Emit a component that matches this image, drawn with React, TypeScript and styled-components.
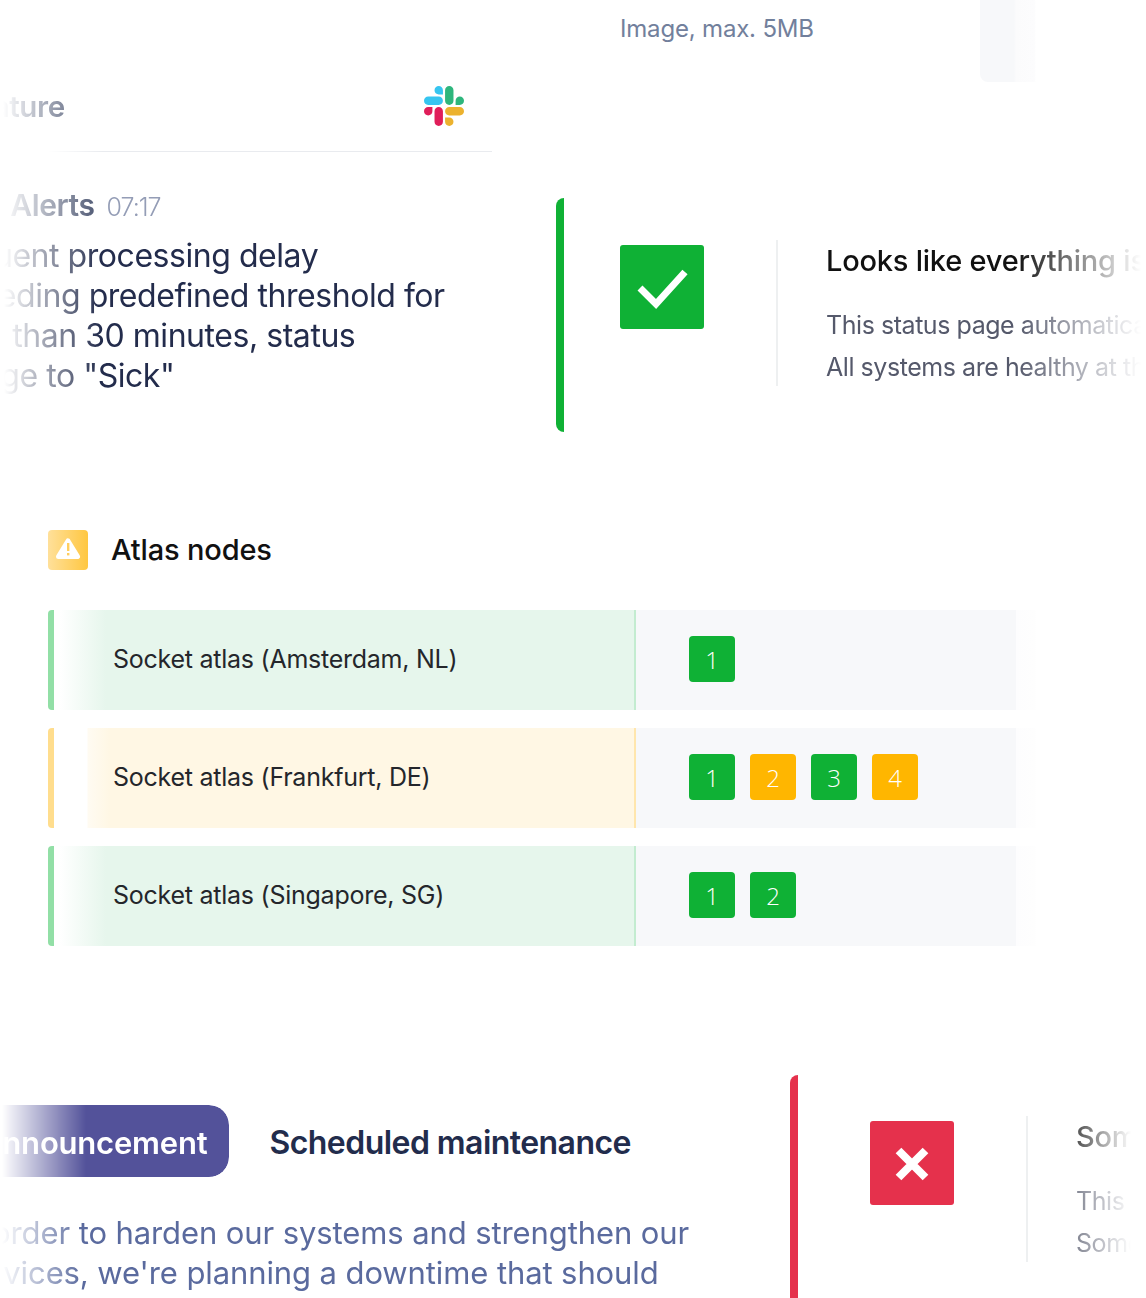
import React from "react";
import styled, { createGlobalStyle, css } from "styled-components";

const Global = createGlobalStyle`
  html, body { margin: 0; padding: 0; background: #fff; }
  body { font-family: Inter, "Liberation Sans", sans-serif; overflow: hidden; }
`;

const fade = (from: number, to: number) => css`
  -webkit-mask-image: linear-gradient(90deg, transparent ${from}px, #000 ${to}px);
  mask-image: linear-gradient(90deg, transparent ${from}px, #000 ${to}px);
`;

const Page = styled.div`
  width: 1146px;
  height: 1298px;
  overflow: hidden;
  background: #fff;
  display: flex;
  flex-direction: column;
`;

const TopRow = styled.section`
  display: grid;
  grid-template-columns: 556px 590px;
  height: 432px;
`;

const LeftPanel = styled.div`
  width: 564px;
  margin-left: -72px;
  padding-top: 62px;
`;

const ChannelHeader = styled.header`
  height: 90px;
  box-sizing: border-box;
  padding: 0 28px 2px 3px;
  display: flex;
  align-items: center;
  justify-content: space-between;
`;

const ChannelRule = styled.div`
  height: 1px;
  background: #e9ebef;
  margin-top: -1px;
  ${fade(120, 175)}
`;

const ChannelName = styled.span`
  font-size: 29.5px;
  font-weight: 600;
  letter-spacing: -0.4px;
  color: #3f4a68;
  ${fade(72, 165)}
`;

const Message = styled.div`
  padding-top: 37px;
  ${fade(76, 172)}
`;

const Author = styled.div`
  display: flex;
  align-items: baseline;
  gap: 12px;
  height: 32px;
  line-height: 32px;
  margin-bottom: 15px;
  padding-left: 13px;
`;

const AuthorName = styled.span`
  font-size: 30px;
  font-weight: 600;
  letter-spacing: -0.4px;
  color: #4a5470;
`;

const Time = styled.span`
  font-size: 25px;
  font-weight: 300;
  letter-spacing: -1px;
  color: #949db6;
`;

const MessageText = styled.p`
  margin: 0;
  font-size: 32px;
  line-height: 40px;
  letter-spacing: -0.45px;
  color: #232c4c;
  white-space: nowrap;
`;

const RightTop = styled.div`
  display: flex;
  flex-direction: column;
`;

const UploadRow = styled.div`
  height: 198px;
  display: flex;
  justify-content: space-between;
  align-items: flex-start;
  padding: 0 110px 0 64px;
`;

const UploadHint = styled.span`
  font-size: 24px;
  line-height: 58px;
  letter-spacing: -0.18px;
  color: #72809c;
`;

const GhostCard = styled.div`
  width: 56px;
  height: 82px;
  border-radius: 0 0 0 8px;
  background: linear-gradient(90deg, #f7f8fa 60%, #fbfbfc 65%, #fcfcfd 97%, #fff);
`;

const Status = styled.div<{ $height: number }>`
  display: flex;
  height: ${(p) => p.$height}px;
  min-width: 0;
`;

const StatusBar = styled.div<{ $color: string; $top?: number }>`
  width: 8px;
  flex: none;
  margin-top: ${(p) => p.$top ?? 0}px;
  background: ${(p) => p.$color};
  border-radius: 10px 0 0 10px;
`;

const StatusIcon = styled.div<{ $color: string; $inset: number }>`
  width: 84px;
  height: 84px;
  flex: none;
  margin: 47px 0 0 ${(p) => p.$inset}px;
  border-radius: 3px;
  background: ${(p) => p.$color};
  display: flex;
`;

const StatusDivider = styled.div`
  width: 2px;
  height: 146px;
  flex: none;
  margin: 42px 48px 0 72px;
  background: #eef0f1;
`;

const StatusBody = styled.div<{ $from: number; $to: number }>`
  flex: 1;
  min-width: 0;
  overflow: hidden;
  white-space: nowrap;
  padding-top: 43px;
  ${(p) => css`
    -webkit-mask-image: linear-gradient(90deg, #000 ${p.$from}px, transparent ${p.$to}px);
    mask-image: linear-gradient(90deg, #000 ${p.$from}px, transparent ${p.$to}px);
  `}
`;

const StatusTitle = styled.div`
  font-size: 29px;
  line-height: 40px;
  font-weight: 500;
  letter-spacing: -0.22px;
  color: #111;
  margin-bottom: 23px;
`;

const StatusLine = styled.div`
  font-size: 25px;
  line-height: 42px;
  letter-spacing: -0.45px;
  color: #55596b;
`;

const Atlas = styled.section`
  margin-top: 98px;
  padding-left: 48px;
`;

const AtlasHead = styled.div`
  display: flex;
  align-items: center;
  gap: 23px;
  height: 40px;
  margin-bottom: 40px;
`;

const WarnIcon = styled.div`
  width: 40px;
  height: 40px;
  border-radius: 4px;
  background: linear-gradient(90deg, #ffe09a, #ffc741);
  display: flex;
`;

const AtlasTitle = styled.h2`
  margin: 0 0 2px;
  font-size: 29px;
  font-weight: 500;
  letter-spacing: -0.15px;
  color: #111;
`;

const Rows = styled.div`
  width: 988px;
  display: flex;
  flex-direction: column;
  gap: 18px;
`;

const Row = styled.div`
  display: flex;
  height: 100px;
`;

const RowBar = styled.div<{ $warn?: boolean }>`
  width: 6px;
  flex: none;
  border-radius: 4px 0 0 4px;
  background: ${(p) => (p.$warn ? "#ffdd8d" : "#92dfa6")};
`;

const RowName = styled.div<{ $warn?: boolean }>`
  width: 582px;
  flex: none;
  box-sizing: border-box;
  padding: 0 0 2px 59px;
  display: flex;
  align-items: center;
  font-size: 25px;
  letter-spacing: -0.25px;
  color: #24262b;
  border-right: 2px solid ${(p) => (p.$warn ? "#ffe6ad" : "#c3ecd0")};
  background: ${(p) =>
    p.$warn
      ? "linear-gradient(90deg, #fff 33px, #fffbf2 34px, #fff7e4 56px)"
      : "linear-gradient(90deg, #fff 6px, #e6f6ec 52px)"};
`;

const RowReplicas = styled.div`
  flex: 1;
  background: linear-gradient(90deg, #f7f8fa 380px, #fdfdfe 380px, #fefefe 399px, #fff 400px);
  display: flex;
  align-items: center;
  gap: 15px;
  padding: 0 0 2px 53px;
`;

const Replica = styled.span<{ $warn?: boolean }>`
  width: 46px;
  height: 46px;
  border-radius: 4px;
  background: ${(p) => (p.$warn ? "#ffb600" : "#0fb135")};
  color: #fff;
  display: flex;
  align-items: center;
  justify-content: center;
  font-family: "Open Sans", sans-serif;
  font-size: 24px;
  font-weight: 300;
`;

const BottomRow = styled.section`
  display: grid;
  grid-template-columns: 790px 356px;
  margin-top: 128px;
`;

const Announcement = styled.div`
  margin-left: -48px;
  padding-top: 31px;
`;

const AnnouncementHead = styled.div`
  display: flex;
  align-items: center;
  gap: 40px;
`;

const Pill = styled.span`
  height: 72px;
  box-sizing: border-box;
  padding: 2px 22px 0 28px;
  display: flex;
  align-items: center;
  border-radius: 0 20px 20px 0;
  background: #53529a;
  color: #fff;
  font-size: 31px;
  font-weight: 600;
  letter-spacing: -0.2px;
  ${fade(50, 134)}
`;

const AnnouncementTitle = styled.h3`
  margin: 2px 0 0;
  font-size: 32px;
  font-weight: 600;
  letter-spacing: -0.55px;
  color: #222c4c;
`;

const AnnouncementText = styled.p`
  margin: 36px 0 0 5px;
  font-size: 31px;
  line-height: 40px;
  letter-spacing: -0.1px;
  color: #5a6a9e;
  white-space: nowrap;
  ${fade(45, 125)}
`;

const GREEN = "#0fb135";
const RED = "#e5314c";

const rows = [
  { name: "Socket atlas (Amsterdam, NL)", warn: false, replicas: [false] },
  { name: "Socket atlas (Frankfurt, DE)", warn: true, replicas: [false, true, false, true] },
  { name: "Socket atlas (Singapore, SG)", warn: false, replicas: [false, false] },
];

function SlackLogo() {
  return (
    <svg width="40" height="40" viewBox="0 0 122.8 122.8">
      <path fill="#E01E5A" d="M25.8 77.6c0 7.1-5.8 12.9-12.9 12.9S0 84.7 0 77.6s5.8-12.9 12.9-12.9h12.9v12.9zm6.5 0c0-7.1 5.8-12.9 12.9-12.9s12.9 5.8 12.9 12.9v32.3c0 7.1-5.8 12.9-12.9 12.9s-12.9-5.8-12.9-12.9V77.6z" />
      <path fill="#36C5F0" d="M45.2 25.8c-7.1 0-12.9-5.8-12.9-12.9S38.1 0 45.2 0s12.9 5.8 12.9 12.9v12.9H45.2zm0 6.5c7.1 0 12.9 5.8 12.9 12.9s-5.8 12.9-12.9 12.9H12.9C5.8 58.1 0 52.3 0 45.2s5.8-12.9 12.9-12.9h32.3z" />
      <path fill="#2EB67D" d="M97 45.2c0-7.1 5.8-12.9 12.9-12.9s12.9 5.8 12.9 12.9-5.8 12.9-12.9 12.9H97V45.2zm-6.5 0c0 7.1-5.8 12.9-12.9 12.9s-12.9-5.8-12.9-12.9V12.9C64.7 5.8 70.5 0 77.6 0s12.9 5.8 12.9 12.9v32.3z" />
      <path fill="#ECB22E" d="M77.6 97c7.1 0 12.9 5.8 12.9 12.9s-5.8 12.9-12.9 12.9-12.9-5.8-12.9-12.9V97h12.9zm0-6.5c-7.1 0-12.9-5.8-12.9-12.9s5.8-12.9 12.9-12.9h32.3c7.1 0 12.9 5.8 12.9 12.9s-5.8 12.9-12.9 12.9H77.6z" />
    </svg>
  );
}

function CheckGlyph() {
  return (
    <svg width="84" height="84" viewBox="0 0 84 84">
      <path d="M20 43 L36 59 L65 27" fill="none" stroke="#fff" strokeWidth="7" />
    </svg>
  );
}

function CrossGlyph() {
  return (
    <svg width="84" height="84" viewBox="0 0 84 84">
      <path d="M28.5 29.5 L55.5 56.5 M55.5 29.5 L28.5 56.5" fill="none" stroke="#fff" strokeWidth="8" />
    </svg>
  );
}

function WarnGlyph() {
  return (
    <svg width="40" height="40" viewBox="0 0 40 40">
      <path d="M20 11 L29.5 26.5 H10.5 Z" fill="#fff" stroke="#fff" strokeWidth="5" strokeLinejoin="round" />
      <rect x="19" y="13" width="2.4" height="8" fill="#ffce5e" />
      <rect x="19" y="23" width="2.4" height="2.4" fill="#ffce5e" />
    </svg>
  );
}

export default function App() {
  return (
    <Page>
      <Global />
      <TopRow>
        <LeftPanel>
          <ChannelHeader>
            <ChannelName>Signature</ChannelName>
            <SlackLogo />
          </ChannelHeader>
          <ChannelRule />
          <Message>
            <Author>
              <AuthorName>Vigil Alerts</AuthorName>
              <Time>07:17</Time>
            </Author>
            <MessageText>
              Frequent processing delay
              <br />
              exceeding predefined threshold for
              <br />
              more than 30 minutes, status
              <br />
              change to "Sick"
            </MessageText>
          </Message>
        </LeftPanel>
        <RightTop>
          <UploadRow>
            <UploadHint>Image, max. 5MB</UploadHint>
            <GhostCard />
          </UploadRow>
          <Status $height={234}>
            <StatusBar $color={GREEN} />
            <StatusIcon $color={GREEN} $inset={56}>
              <CheckGlyph />
            </StatusIcon>
            <StatusDivider />
            <StatusBody $from={190} $to={315}>
              <StatusTitle>Looks like everything is operational</StatusTitle>
              <StatusLine>This status page automatically monitors our systems.</StatusLine>
              <StatusLine>All systems are healthy at the moment.</StatusLine>
            </StatusBody>
          </Status>
        </RightTop>
      </TopRow>

      <Atlas>
        <AtlasHead>
          <WarnIcon>
            <WarnGlyph />
          </WarnIcon>
          <AtlasTitle>Atlas nodes</AtlasTitle>
        </AtlasHead>
        <Rows>
          {rows.map((row) => (
            <Row key={row.name}>
              <RowBar $warn={row.warn} />
              <RowName $warn={row.warn}>{row.name}</RowName>
              <RowReplicas>
                {row.replicas.map((warn, i) => (
                  <Replica key={i} $warn={warn}>
                    {i + 1}
                  </Replica>
                ))}
              </RowReplicas>
            </Row>
          ))}
        </Rows>
      </Atlas>

      <BottomRow>
        <Announcement>
          <AnnouncementHead>
            <Pill>Announcement</Pill>
            <AnnouncementTitle>Scheduled maintenance</AnnouncementTitle>
          </AnnouncementHead>
          <AnnouncementText>
            In order to harden our systems and strengthen our
            <br />
            services, we're planning a downtime that should
          </AnnouncementText>
        </Announcement>
        <Status $height={240}>
          <StatusBar $color={RED} $top={1} />
          <StatusIcon $color={RED} $inset={72}>
            <CrossGlyph />
          </StatusIcon>
          <StatusDivider />
          <StatusBody $from={-20} $to={55}>
            <StatusTitle>Some services are down</StatusTitle>
            <StatusLine>This status page automatically monitors our systems.</StatusLine>
            <StatusLine>Some systems are not healthy.</StatusLine>
          </StatusBody>
        </Status>
      </BottomRow>
    </Page>
  );
}
